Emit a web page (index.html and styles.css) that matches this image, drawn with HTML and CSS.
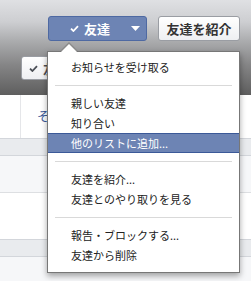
FILE: index.html
```html
<!DOCTYPE html>
<html lang="ja">
<head>
<meta charset="utf-8">
<link rel="stylesheet" href="styles.css">
</head>
<body>
<div class="page">
  <header class="cover">
    <div class="actions">
      <button class="btn btn-friend">
        <svg class="check" width="9" height="7" viewBox="0 0 9 7"><path d="M1 3.6 L3.4 6 L8 1.2" fill="none" stroke="#fff" stroke-width="1.8"/></svg>
        <span class="label">友達</span>
        <svg class="caret" width="9" height="5" viewBox="0 0 9 5"><path d="M0 0 H9 L4.5 5 Z" fill="#fff"/></svg>
      </button>
      <button class="btn btn-suggest">友達を紹介</button>
    </div>
    <div class="actions2">
      <button class="btn btn-small">
        <svg class="check" width="9" height="7" viewBox="0 0 9 7"><path d="M1 3.6 L3.4 6 L8 1.2" fill="none" stroke="#4b4f56" stroke-width="1.8"/></svg>
        <span>友達</span>
      </button>
    </div>
  </header>
  <nav class="tabs">
    <div class="tab tab-first"></div>
    <div class="tab tab-more">その他</div>
  </nav>
  <div class="band"></div>
  <div class="soft"></div>
  <div class="plain"></div>
  <div class="band"></div>
  <div class="soft"></div>

  <div class="menu">
    <ul class="menu-list">
      <li class="item">お知らせを受け取る</li>
      <li class="sep"></li>
      <li class="item">親しい友達</li>
      <li class="item">知り合い</li>
      <li class="item active">他のリストに追加...</li>
      <li class="sep"></li>
      <li class="item">友達を紹介...</li>
      <li class="item">友達とのやり取りを見る</li>
      <li class="sep"></li>
      <li class="item">報告・ブロックする...</li>
      <li class="item">友達から削除</li>
    </ul>
  </div>
</div>
</body>
</html>
```

FILE: styles.css
```css
* { box-sizing: border-box; }
html, body { margin: 0; padding: 0; }
body {
  width: 251px;
  height: 281px;
  overflow: hidden;
  font-family: "Noto Sans CJK JP", "Liberation Sans", sans-serif;
  background: #f6f7f9;
}
.page {
  position: relative;
  width: 251px;
  height: 281px;
  overflow: hidden;
}
.cover {
  height: 95px;
  padding-top: 16px;
  background: linear-gradient(#dfe0e3 0px, #cdced1 22px, #a9aaac 42px, #858586 65px, #5e5e5e 95px);
}
.actions {
  display: flex;
  justify-content: flex-end;
  gap: 11px;
  padding-right: 11px;
  height: 25px;
}
.btn {
  font-family: inherit;
  margin: 0;
  height: 25px;
  border-radius: 3px;
  font-size: 13px;
  font-weight: bold;
  line-height: 1;
  display: flex;
  align-items: center;
  padding: 0;
}
.btn-friend {
  width: 99px;
  background: #6d84b4;
  border: 1px solid #4e69a2;
  color: #fff;
  padding-left: 21px;
  padding-right: 6px;
}
.btn-friend .check { margin-right: 5px; }
.btn-friend .caret { margin-left: auto; }
.btn-suggest {
  width: 82px;
  background: linear-gradient(#ffffff, #eeeff2);
  border: 1px solid #9a9da3;
  color: #333;
  justify-content: center;
}
.actions2 {
  margin-top: 15px;
  padding-left: 21px;
}
.btn-small {
  width: 90px;
  height: 24px;
  background: linear-gradient(#ffffff, #eeeff2);
  border: 1px solid #9a9da3;
  color: #4b4f56;
  padding-left: 7px;
}
.btn-small .check { margin-right: 5px; }
.tabs {
  display: flex;
  height: 43px;
  background: #fff;
}
.tab-first {
  width: 21px;
  border-right: 1px solid #e5e6e9;
}
.tab-more {
  padding-left: 16px;
  padding-top: 13px;
  font-size: 13px;
  line-height: 16px;
  color: #3b5998;
}
.band {
  height: 18px;
  background: #e9ebee;
  border-top: 1px solid #d3d6db;
  border-bottom: 1px solid #d3d6db;
}
.soft {
  height: 37px;
  background: #f6f7f9;
  border-bottom: 1px solid #dddfe2;
}
.plain {
  height: 46px;
  background: #fff;
}
.menu {
  position: absolute;
  left: 47px;
  top: 51px;
  width: 193px;
  background: #fff;
  border: 1px solid #777;
  box-shadow: 0 3px 6px rgba(0, 0, 0, 0.35);
}
.menu::before,
.menu::after {
  content: "";
  position: absolute;
  width: 0;
  height: 0;
  border-style: solid;
  border-color: transparent;
}
.menu::before {
  left: 12px;
  top: -10px;
  border-width: 0 9px 9px 9px;
  border-bottom-color: #8a8a8a;
}
.menu::after {
  left: 13px;
  top: -8px;
  border-width: 0 8px 8px 8px;
  border-bottom-color: #fff;
}
.menu-list {
  list-style: none;
  margin: 0;
  padding: 5px 0 7px;
}
.item {
  height: 20px;
  line-height: 18px;
  border-top: 1px solid transparent;
  border-bottom: 1px solid transparent;
  padding-left: 23px;
  font-size: 11px;
  color: #222;
  white-space: nowrap;
}
.item.active {
  background: #6d84b4;
  border-top-color: #3b5998;
  border-bottom-color: #3b5998;
  color: #fff;
}
.sep {
  height: 1px;
  margin: 8px 7px 7px;
  background: #d9d9d9;
}
```
